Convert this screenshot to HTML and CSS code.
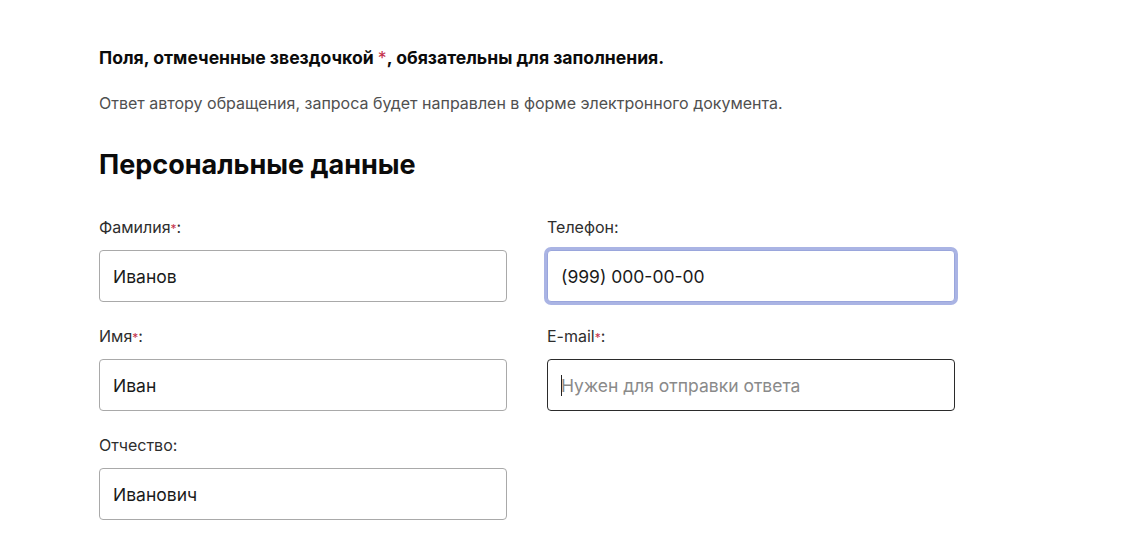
FILE: index.html
```html
<!DOCTYPE html>
<html lang="ru">
<head>
<meta charset="utf-8">
<title>Персональные данные</title>
<link rel="stylesheet" href="styles.css">
</head>
<body>
<main class="page">
  <p class="required">Поля, отмеченные звездочкой <span class="star">*</span>, обязательны для заполнения.</p>
  <p class="note">Ответ автору обращения, запроса будет направлен в форме электронного документа.</p>
  <h2 class="section-title">Персональные данные</h2>
  <form class="form-grid">
    <div class="field">
      <label class="label" for="lastname">Фамилия<span class="star">*</span>:</label>
      <input class="input" id="lastname" type="text" value="Иванов">
    </div>
    <div class="field">
      <label class="label" for="phone">Телефон:</label>
      <input class="input input-focus" id="phone" type="text" value="(999) 000-00-00">
    </div>
    <div class="field">
      <label class="label" for="firstname">Имя<span class="star">*</span>:</label>
      <input class="input" id="firstname" type="text" value="Иван">
    </div>
    <div class="field">
      <label class="label" for="email">E-mail<span class="star">*</span>:</label>
      <div class="input-wrap">
        <input class="input input-hover" id="email" type="text" placeholder="Нужен для отправки ответа">
        <span class="caret"></span>
      </div>
    </div>
    <div class="field">
      <label class="label" for="middlename">Отчество:</label>
      <input class="input" id="middlename" type="text" value="Иванович">
    </div>
  </form>
</main>
</body>
</html>
```

FILE: styles.css
```css
html, body {
  margin: 0;
  padding: 0;
  background: #ffffff;
}

body {
  font-family: Inter, Roboto, "Liberation Sans", Arial, sans-serif;
  color: #111;
}

.page {
  padding: 48px 0 0 99px;
}

.required {
  margin: 0;
  font-size: 17.6px;
  line-height: 20px;
  font-weight: 700;
  color: #0b0b0b;
}

.star {
  color: #c4314b;
  font-weight: 400;
  line-height: 0;
}

.note {
  margin: 25px 0 0;
  font-size: 16px;
  line-height: 20px;
  color: #505050;
}

.section-title {
  margin: 36px 0 0;
  font-size: 27px;
  line-height: 32px;
  font-weight: 700;
  color: #0b0b0b;
}

.form-grid {
  margin-top: 36px;
  display: grid;
  grid-template-columns: 408px 408px;
  column-gap: 40px;
  row-gap: 24px;
}

.field {
  display: flex;
  flex-direction: column;
  gap: 13px;
}

.label {
  font-size: 16px;
  line-height: 20px;
  height: 20px;
  color: #2e2e2e;
}

.label .star {
  font-size: 12px;
}

.input-wrap {
  position: relative;
}

.input {
  box-sizing: border-box;
  width: 408px;
  height: 52px;
  margin: 0;
  padding: 0 13px;
  border: 1px solid #a9a9a9;
  border-radius: 4px;
  background: #fff;
  font-family: Inter, Roboto, "Liberation Sans", Arial, sans-serif;
  font-size: 17.5px;
  color: #1a1a1a;
  outline: none;
}

.input::placeholder {
  color: #8a8a8a;
}

.input-focus {
  border-color: #9aa6dc;
  box-shadow: 0 0 0 3px #aab4e4;
}

.input-hover {
  border-color: #2b2b2b;
}

.caret {
  position: absolute;
  left: 14px;
  top: 16px;
  width: 1px;
  height: 21px;
  background: #222;
}
```
